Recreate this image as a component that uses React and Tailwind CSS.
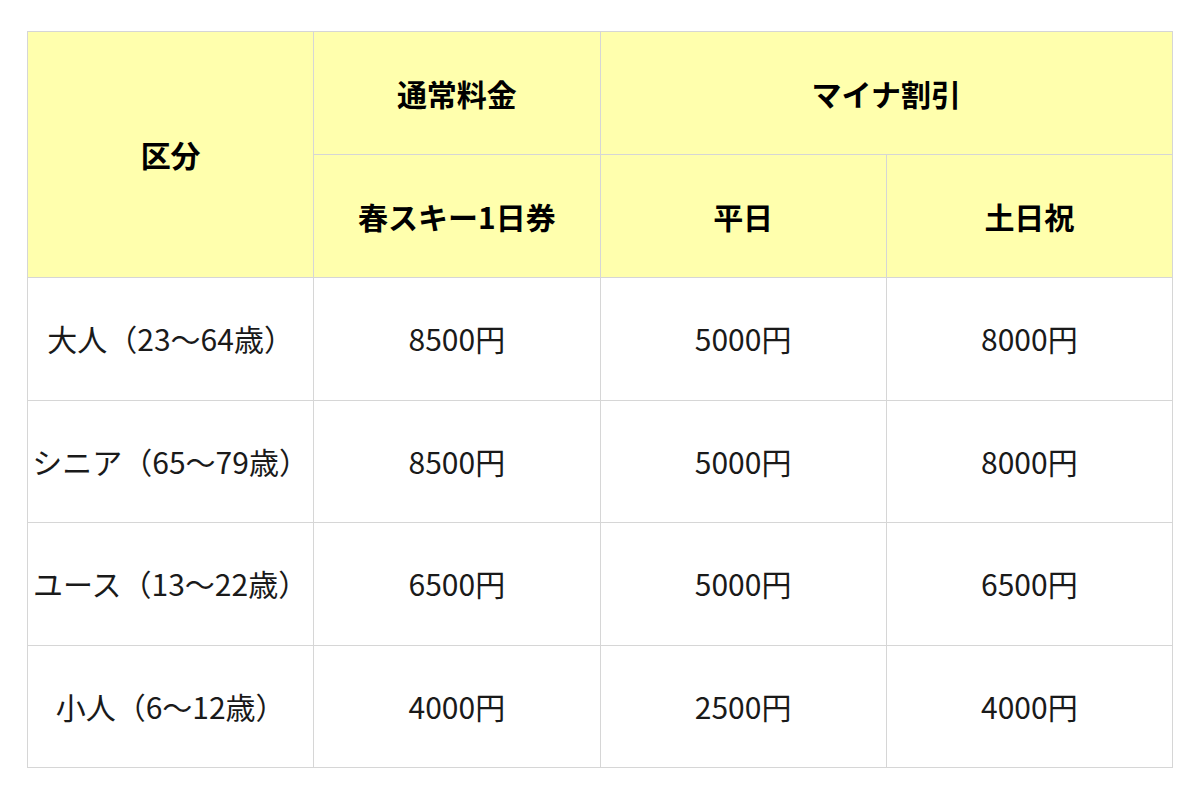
const ROWS = [
  ["大人（23〜64歳）", "8500円", "5000円", "8000円"],
  ["シニア（65〜79歳）", "8500円", "5000円", "8000円"],
  ["ユース（13〜22歳）", "6500円", "5000円", "6500円"],
  ["小人（6〜12歳）", "4000円", "2500円", "4000円"],
];

const th = "border border-[#d6d6d6] bg-[#ffffad] text-center font-bold text-black text-[30px]";
const td = "border border-[#d6d6d6] text-center text-[30px] text-[#1a1a1a]";

export default function App() {
  return (
    <div
      className="min-h-[800px] bg-white pt-[31px] pl-[27px]"
      style={{ fontFamily: '"Noto Sans CJK JP", "Noto Sans", sans-serif' }}
    >
      <table className="w-[1146px] table-fixed border-collapse">
        <thead>
          <tr className="h-[123px]">
            <th rowSpan={2} className={th}>区分</th>
            <th className={th}>通常料金</th>
            <th colSpan={2} className={th}>マイナ割引</th>
          </tr>
          <tr className="h-[123px]">
            <th className={th}>春スキー1日券</th>
            <th className={th}>平日</th>
            <th className={th}>土日祝</th>
          </tr>
        </thead>
        <tbody>
          {ROWS.map((r) => (
            <tr key={r[0]} className="h-[122.5px]">
              {r.map((c, i) => (
                <td key={i} className={td}>{c}</td>
              ))}
            </tr>
          ))}
        </tbody>
      </table>
    </div>
  );
}
